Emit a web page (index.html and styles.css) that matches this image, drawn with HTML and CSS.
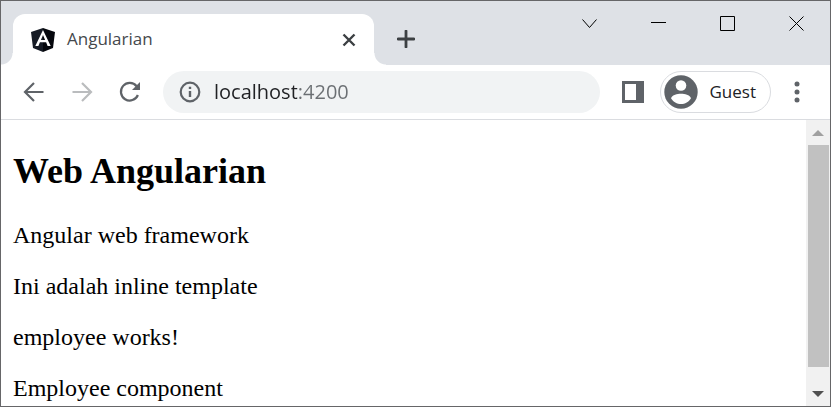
FILE: index.html
```html
<!DOCTYPE html>
<html lang="en">
<head>
<meta charset="utf-8">
<meta name="viewport" content="width=device-width, initial-scale=1">
<title>Angularian</title>
<link rel="stylesheet" href="styles.css">
</head>
<body>
<div class="window">
  <header class="tab-strip">
    <div class="tab">
      <svg class="favicon" viewBox="0 0 24 24" aria-hidden="true">
        <path fill="#161b25" d="M12 0 0 4 2 20 12 24Z"/>
        <path fill="#05070d" d="M12 0 24 4 22 20 12 24Z"/>
        <path fill="#fff" fill-rule="evenodd" d="M12 2 4.3 18h3.1l1.5-3.7h6.2l1.5 3.7h3.1ZM12 7l2.1 4.9H9.9Z"/>
      </svg>
      <span class="tab-title">Angularian</span>
      <button class="tab-close" type="button" aria-label="Close tab">
        <svg width="14" height="14" viewBox="0 0 14 14"><path d="M1.5 1.5 12.5 12.5M12.5 1.5 1.5 12.5" stroke="#3c4043" stroke-width="2.4"/></svg>
      </button>
    </div>
    <button class="new-tab" type="button" aria-label="New tab">
      <svg width="18" height="18" viewBox="0 0 18 18"><path d="M9 1V17M1 9H17" stroke="#3c4043" stroke-width="2.8" stroke-linecap="round"/></svg>
    </button>
    <div class="window-controls">
      <button type="button" aria-label="Search tabs"><svg width="17" height="15" viewBox="-2 0 17 15"><path d="M.5 3.5 7.5 11.5 14.5 3.5"/></svg></button>
      <button type="button" aria-label="Minimize"><svg width="17" height="15" viewBox="-2 0 17 15"><path d="M0 6.5H15"/></svg></button>
      <button type="button" aria-label="Maximize"><svg width="17" height="15" viewBox="-2 0 17 15"><path d="M.5.5H14.5V14.5H.5Z"/></svg></button>
      <button type="button" aria-label="Close"><svg width="17" height="15" viewBox="-2 0 17 15"><path d="M.5.5 14.5 14.5M14.5.5.5 14.5"/></svg></button>
    </div>
  </header>

  <nav class="toolbar" aria-label="Browser toolbar">
    <button class="nav-button" type="button" aria-label="Back">
      <svg width="22" height="22" viewBox="0 0 22 22"><path d="M20.5 11H2M11 2 2 11 11 20" fill="none" stroke="#5f6368" stroke-width="2.2"/></svg>
    </button>
    <button class="nav-button" type="button" aria-label="Forward" disabled>
      <svg width="22" height="22" viewBox="0 0 22 22"><path d="M1.5 11H20M11 2 20 11 11 20" fill="none" stroke="#babcbe" stroke-width="2.2"/></svg>
    </button>
    <button class="nav-button" type="button" aria-label="Reload">
      <svg width="22" height="22" viewBox="0 0 22 22"><path d="M17.6 5.2A8.8 8.8 0 1 0 18.9 14" fill="none" stroke="#5f6368" stroke-width="2.2"/><path d="M21 1V9H13Z" fill="#5f6368"/></svg>
    </button>
    <div class="omnibox">
      <svg width="22" height="22" viewBox="0 0 22 22" aria-hidden="true"><circle cx="11" cy="11" r="9.3" fill="none" stroke="#5f6368" stroke-width="2.2"/><path d="M11 5.8V8M11 10V16" stroke="#5f6368" stroke-width="2.4"/></svg>
      <input class="address" type="text" value="localhost:4200" aria-label="Address" spellcheck="false">
    </div>
    <button class="side-panel" type="button" aria-label="Side panel">
      <svg width="22" height="22" viewBox="0 0 22 22"><path fill="#5f6368" fill-rule="evenodd" d="M0 0H22V22H0ZM3 3V19H14V3Z"/></svg>
    </button>
    <button class="profile" type="button">
      <svg width="34" height="34" viewBox="0 0 34 34" aria-hidden="true"><circle cx="17" cy="17" r="16.7" fill="#5f6368"/><circle cx="17" cy="10.5" r="5.3" fill="#fff"/><path d="M7 23.2C8.5 20 13 18.8 17 18.8S25.5 20 27 23.2C24.8 26.8 21 29 17 29S9.2 26.8 7 23.2Z" fill="#fff"/></svg>
      <span>Guest</span>
    </button>
    <button class="menu" type="button" aria-label="Menu">
      <svg width="6" height="22" viewBox="0 0 6 22" fill="#5f6368"><circle cx="3" cy="3" r="2.5"/><circle cx="3" cy="11" r="2.5"/><circle cx="3" cy="19" r="2.5"/></svg>
    </button>
  </nav>

  <div class="viewport">
    <main class="page">
      <h2>Web Angularian</h2>
      <p>Angular web framework</p>
      <p>Ini adalah inline template</p>
      <p>employee works!</p>
      <p>Employee component</p>
    </main>
    <div class="scrollbar">
      <button type="button" aria-label="Scroll up"><svg width="12" height="6" viewBox="0 0 12 6"><path d="M0 6 6 0 12 6Z" fill="#a0a0a0"/></svg></button>
      <div class="track"><div class="thumb"></div></div>
      <button type="button" aria-label="Scroll down"><svg width="12" height="6" viewBox="0 0 12 6"><path d="M0 0H12L6 6Z" fill="#505050"/></svg></button>
    </div>
  </div>
</div>
</body>
</html>
```
FILE: styles.css
```css
* {
  box-sizing: border-box;
}

body {
  margin: 0;
  font-family: "Open Sans", "Noto Sans", sans-serif;
}

button {
  display: flex;
  align-items: center;
  justify-content: center;
  flex: none;
  margin: 0;
  padding: 0;
  border: 0;
  background: none;
  font: inherit;
}

svg {
  display: block;
  flex: none;
}

.window {
  display: flex;
  flex-direction: column;
  height: 100vh;
  border: 1px solid #666668;
  background: #fff;
  overflow: hidden;
}

.tab-strip {
  display: flex;
  flex: none;
  align-items: flex-start;
  padding-left: 12px;
  background: #dee1e6;
}

.tab {
  position: relative;
  display: flex;
  align-items: center;
  flex: 0 1 361px;
  gap: 12px;
  height: 51px;
  margin-top: 13px;
  padding: 0 12px 0 18px;
  border-radius: 12px 12px 0 0;
  background: #fff;
}

.tab::before,
.tab::after {
  content: "";
  position: absolute;
  bottom: 0;
  width: 12px;
  height: 12px;
}

.tab::before {
  right: 100%;
  background: radial-gradient(circle at 0 0, transparent 11px, #fff 12px);
}

.tab::after {
  left: 100%;
  background: radial-gradient(circle at 100% 0, transparent 11px, #fff 12px);
}

.favicon {
  width: 24px;
  height: 24px;
}

.tab-title {
  flex: 1;
  padding-bottom: 2px;
  color: #45484c;
  font-size: 17px;
  line-height: 24px;
}

.tab-close {
  width: 26px;
  height: 26px;
}

.new-tab {
  width: 40px;
  height: 40px;
  margin: 18px 0 0 12px;
}

.window-controls {
  display: flex;
  margin-left: auto;
}

.window-controls button {
  width: 69px;
  height: 45px;
}

.window-controls svg {
  fill: none;
  stroke: #000;
  stroke-width: 1;
}

.toolbar {
  display: flex;
  flex: none;
  align-items: center;
  height: 55px;
  padding: 0 15px 0 9px;
  border-bottom: 1px solid #dadce0;
}

.nav-button {
  width: 48px;
  height: 42px;
}

.omnibox {
  display: flex;
  flex: 1;
  align-items: center;
  gap: 13px;
  min-width: 0;
  height: 42px;
  margin: 0 9px;
  padding: 0 16px;
  border-radius: 21px;
  background: #f1f3f4;
}

.address {
  flex: 1;
  min-width: 0;
  padding: 0;
  border: 0;
  outline: 0;
  /* Host in the strong colour, port in the muted one. */
  background: linear-gradient(to right, #202124 83px, #6b6f73 83px);
  -webkit-background-clip: text;
  background-clip: text;
  color: transparent;
  font: 20px/28px "Open Sans", "Noto Sans", sans-serif;
}

.side-panel {
  width: 48px;
  height: 42px;
}

.profile {
  gap: 12px;
  height: 42px;
  margin-left: 3px;
  padding: 0 14px 0 3px;
  border: 1px solid #dadce0;
  border-radius: 21px;
  color: #202124;
  font-size: 17px;
}

.profile span {
  padding-bottom: 2px;
}

.menu {
  width: 36px;
  height: 42px;
  margin-left: 8px;
}

.viewport {
  display: flex;
  flex: 1;
  min-height: 0;
}

.page {
  flex: 1;
  padding: 0 12px;
  overflow: hidden;
  color: #000;
  font: 24px/27px "Liberation Serif", serif;
}

.page h2 {
  margin: 31px 0 30px;
  font-size: 36px;
  line-height: 41px;
}

.page p {
  margin: 24px 0;
}

.scrollbar {
  display: flex;
  flex-direction: column;
  width: 24px;
  background: #f1f1f1;
}

.scrollbar button {
  width: 24px;
  height: 25px;
}

.track {
  flex: 1;
  padding: 0 1px 0 2px;
}

.thumb {
  height: 94%;
  background: #c1c1c1;
}
```
